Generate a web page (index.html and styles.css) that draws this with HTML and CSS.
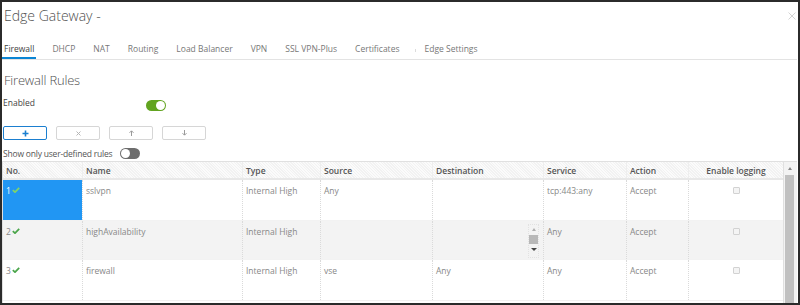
FILE: index.html
```html
<!DOCTYPE html>
<html lang="en">
<head>
<meta charset="utf-8">
<title>Edge Gateway</title>
<link rel="stylesheet" href="styles.css">
</head>
<body>
<div class="frame">
  <header class="head">
    <h1 class="title">Edge Gateway -</h1>
    <svg class="close" width="8" height="8" viewBox="0 0 8 8"><path d="M0.5 0.5L7.5 7.5M7.5 0.5L0.5 7.5" stroke="#d4d4d4" stroke-width="1" fill="none"/></svg>
  </header>
  <nav class="tabs">
    <span class="tab active">Firewall</span>
    <span class="tab">DHCP</span>
    <span class="tab">NAT</span>
    <span class="tab">Routing</span>
    <span class="tab">Load Balancer</span>
    <span class="tab">VPN</span>
    <span class="tab">SSL VPN-Plus</span>
    <span class="tab">Certificates</span>
    <span class="tab-sep"></span>
    <span class="tab">Edge Settings</span>
  </nav>
  <h2 class="section">Firewall Rules</h2>
  <div class="field">
    <span class="field-label">Enabled</span>
    <span class="toggle on"><span class="knob"></span></span>
  </div>
  <div class="actions">
    <button class="btn primary">
      <svg width="7" height="7" viewBox="0 0 7 7"><path d="M3.5 0.5V6.5M0.5 3.5H6.5" stroke="#1b7fd0" stroke-width="1.6"/></svg>
    </button>
    <button class="btn">
      <svg width="5" height="5" viewBox="0 0 5 5"><path d="M0.5 0.5L4.5 4.5M4.5 0.5L0.5 4.5" stroke="#b5b5b5" stroke-width="1"/></svg>
    </button>
    <button class="btn">
      <svg width="5" height="6" viewBox="0 0 5 6"><path d="M2.5 6V1M0.5 2.8L2.5 0.8L4.5 2.8" stroke="#9a9a9a" stroke-width="1" fill="none"/></svg>
    </button>
    <button class="btn">
      <svg width="5" height="6" viewBox="0 0 5 6"><path d="M2.5 0V5M0.5 3.2L2.5 5.2L4.5 3.2" stroke="#9a9a9a" stroke-width="1" fill="none"/></svg>
    </button>
  </div>
  <div class="filter">
    <span class="filter-label">Show only user-defined rules</span>
    <span class="toggle off"><span class="knob"></span></span>
  </div>
  <div class="grid-wrap">
    <div class="grid">
      <div class="row head-row">
        <div class="cell">No.</div>
        <div class="cell">Name</div>
        <div class="cell">Type</div>
        <div class="cell">Source</div>
        <div class="cell">Destination</div>
        <div class="cell">Service</div>
        <div class="cell">Action</div>
        <div class="cell center">Enable logging</div>
      </div>
      <div class="row">
        <div class="cell num selected">1<svg class="check" width="8" height="6" viewBox="0 0 8 6"><path d="M0.8 3.2L3 5.2L7.2 0.8" stroke="#7fd36a" stroke-width="1.7" fill="none"/></svg></div>
        <div class="cell">sslvpn</div>
        <div class="cell">Internal High</div>
        <div class="cell">Any</div>
        <div class="cell"></div>
        <div class="cell">tcp:443:any</div>
        <div class="cell">Accept</div>
        <div class="cell center"><span class="checkbox"></span></div>
      </div>
      <div class="row alt">
        <div class="cell num">2<svg class="check" width="8" height="6" viewBox="0 0 8 6"><path d="M0.8 3.2L3 5.2L7.2 0.8" stroke="#4aa54a" stroke-width="1.7" fill="none"/></svg></div>
        <div class="cell">highAvailability</div>
        <div class="cell">Internal High</div>
        <div class="cell"></div>
        <div class="cell dest">
          <div class="mini-scroll">
            <span class="arrow-up"></span>
            <span class="mini-thumb"></span>
            <span class="arrow-down"></span>
          </div>
        </div>
        <div class="cell">Any</div>
        <div class="cell">Accept</div>
        <div class="cell center"><span class="checkbox"></span></div>
      </div>
      <div class="row">
        <div class="cell num">3<svg class="check" width="8" height="6" viewBox="0 0 8 6"><path d="M0.8 3.2L3 5.2L7.2 0.8" stroke="#4aa54a" stroke-width="1.7" fill="none"/></svg></div>
        <div class="cell">firewall</div>
        <div class="cell">Internal High</div>
        <div class="cell">vse</div>
        <div class="cell">Any</div>
        <div class="cell">Any</div>
        <div class="cell">Accept</div>
        <div class="cell center"><span class="checkbox"></span></div>
      </div>
    </div>
    <div class="vscroll">
      <div class="vscroll-btn"><span class="vscroll-arrow"></span></div>
      <div class="vscroll-thumb"></div>
    </div>
  </div>
</div>
</body>
</html>
```
FILE: styles.css
```css
* { box-sizing: border-box; }
html, body { margin: 0; padding: 0; background: #ffffff; }
body { font-family: "Open Sans", "Liberation Sans", sans-serif; color: #565656; }

.frame {
  width: 800px;
  height: 305px;
  border: 2px solid #2b2b2b;
  overflow: hidden;
  background: #fff;
}

.head {
  height: 36px;
  display: flex;
  justify-content: space-between;
  align-items: flex-start;
  padding: 6px 2px 0 2px;
}
.title {
  margin: 0;
  font-size: 14px;
  line-height: 16px;
  font-weight: 300;
  color: #4f4f4f;
}
.close { margin-top: 4px; }

.tabs {
  display: flex;
  gap: 14px;
  border-bottom: 1px solid #e3e3e3;
  margin-right: 1px;
}
.tab {
  padding: 5px 2px 3px 2px;
  font-size: 8.5px;
  line-height: 11px;
  font-weight: 400;
  color: #777;
  border-bottom: 2px solid transparent;
}
.tab.active {
  color: #3f3f3f;
  border-bottom-color: #0a85d4;
}
.tab-sep {
  width: 1px;
  height: 3px;
  margin: 11px -8px 0 0;
  background: #dcdcdc;
}

.section {
  margin: 12px 0 0 2px;
  font-size: 13px;
  line-height: 16px;
  font-weight: 300;
  letter-spacing: -0.2px;
  color: #4f4f4f;
}

.field {
  display: flex;
  align-items: flex-start;
  margin-top: 9px;
  padding-left: 1px;
}
.field-label {
  width: 143px;
  font-size: 8.5px;
  line-height: 11px;
  font-weight: 400;
  color: #444;
}
.toggle {
  display: flex;
  align-items: center;
  width: 20px;
  height: 11px;
  border-radius: 6px;
  padding: 1px;
}
.toggle .knob {
  width: 9px;
  height: 9px;
  border-radius: 50%;
  background: #fff;
}
.toggle.on {
  margin-top: 3px;
  background: #62a420;
  justify-content: flex-end;
}
.toggle.off {
  background: #6d6d6d;
  justify-content: flex-start;
}

.actions {
  display: flex;
  gap: 9px;
  margin-top: 15px;
  padding-left: 1px;
}
.btn {
  width: 44px;
  height: 14px;
  padding: 0;
  margin: 0;
  border: 1px solid #d6d6d6;
  border-radius: 2px;
  background: #fff;
  display: flex;
  align-items: center;
  justify-content: center;
}
.btn.primary { border-color: #1b7fd0; }

.filter {
  display: flex;
  align-items: center;
  gap: 8px;
  margin-top: 7px;
  padding-left: 1px;
  height: 12px;
}
.filter-label {
  font-size: 8.5px;
  line-height: 11px;
  font-weight: 400;
  letter-spacing: -0.2px;
  color: #555;
}

.grid-wrap {
  display: flex;
  margin-top: 2px;
  height: 142px;
  overflow: hidden;
  margin-right: 1px;
}
.grid {
  width: 781px;
  border-left: 1px solid #e0e0e0;
  border-top: 1px solid #e0e0e0;
}
.row {
  display: grid;
  grid-template-columns: 79px 160px 78px 112px 111px 83px 62px 95px;
  height: 41px;
  border-bottom: 1px solid #f2f2f2;
}
.row.alt { background: #f3f3f3; height: 39px; }
.head-row {
  height: 18px;
  border-bottom: 2px solid #e8e8e8;
  background: repeating-linear-gradient(45deg, #f2f2f2 0, #f2f2f2 1px, #fbfbfb 1px, #fbfbfb 2px);
}
.cell {
  padding: 5px 3px 0 3px;
  font-size: 8.5px;
  line-height: 11px;
  color: #888;
  border-left: 1px dotted #dadada;
  min-width: 0;
  white-space: nowrap;
}
.row .cell:first-child { border-left: 0; }
.head-row .cell {
  padding-top: 3px;
  color: #555;
  font-weight: 600;
  border-left: 1px solid #eeeeee;
}
.head-row .cell:first-child { border-left: 0; }
.cell.center { text-align: center; }

.cell.num { display: flex; align-items: flex-start; padding-left: 3px; }
.cell.num .check { margin: 2px 0 0 1px; }
.cell.selected { background: #2196f3; color: #fff; }

.checkbox {
  display: inline-block;
  width: 7px;
  height: 7px;
  margin-top: 0;
  border: 1px solid #d2d2d2;
  border-radius: 1px;
  background: #f4f4f4;
}

.cell.dest { display: flex; justify-content: flex-end; padding: 3px 4px 0 0; }
.mini-scroll {
  width: 11px;
  height: 34px;
  display: flex;
  flex-direction: column;
  align-items: center;
  border: 1px dotted #e2e2e2;
  padding-top: 3px;
}
.arrow-up {
  width: 0; height: 0;
  border-left: 2.5px solid transparent;
  border-right: 2.5px solid transparent;
  border-bottom: 3px solid #b0b0b0;
}
.mini-thumb {
  width: 9px;
  height: 9px;
  margin-top: 4px;
  background: #b8b8b8;
}
.arrow-down {
  width: 0; height: 0;
  margin-top: 4px;
  border-left: 3px solid transparent;
  border-right: 3px solid transparent;
  border-top: 3px solid #444;
}

.vscroll {
  width: 14px;
  border-left: 1px solid #e0e0e0;
  border-top: 1px solid #e0e0e0;
  background: #f3f3f3;
  display: flex;
  flex-direction: column;
}
.vscroll-btn {
  height: 13px;
  display: flex;
  justify-content: center;
  align-items: center;
  padding-right: 2px;
}
.vscroll-arrow {
  width: 0; height: 0;
  border-left: 2.5px solid transparent;
  border-right: 2.5px solid transparent;
  border-bottom: 3px solid #888;
}
.vscroll-thumb {
  flex: 1;
  width: 9px;
  margin-left: 1px;
  background: #c1c1c1;
}
```
